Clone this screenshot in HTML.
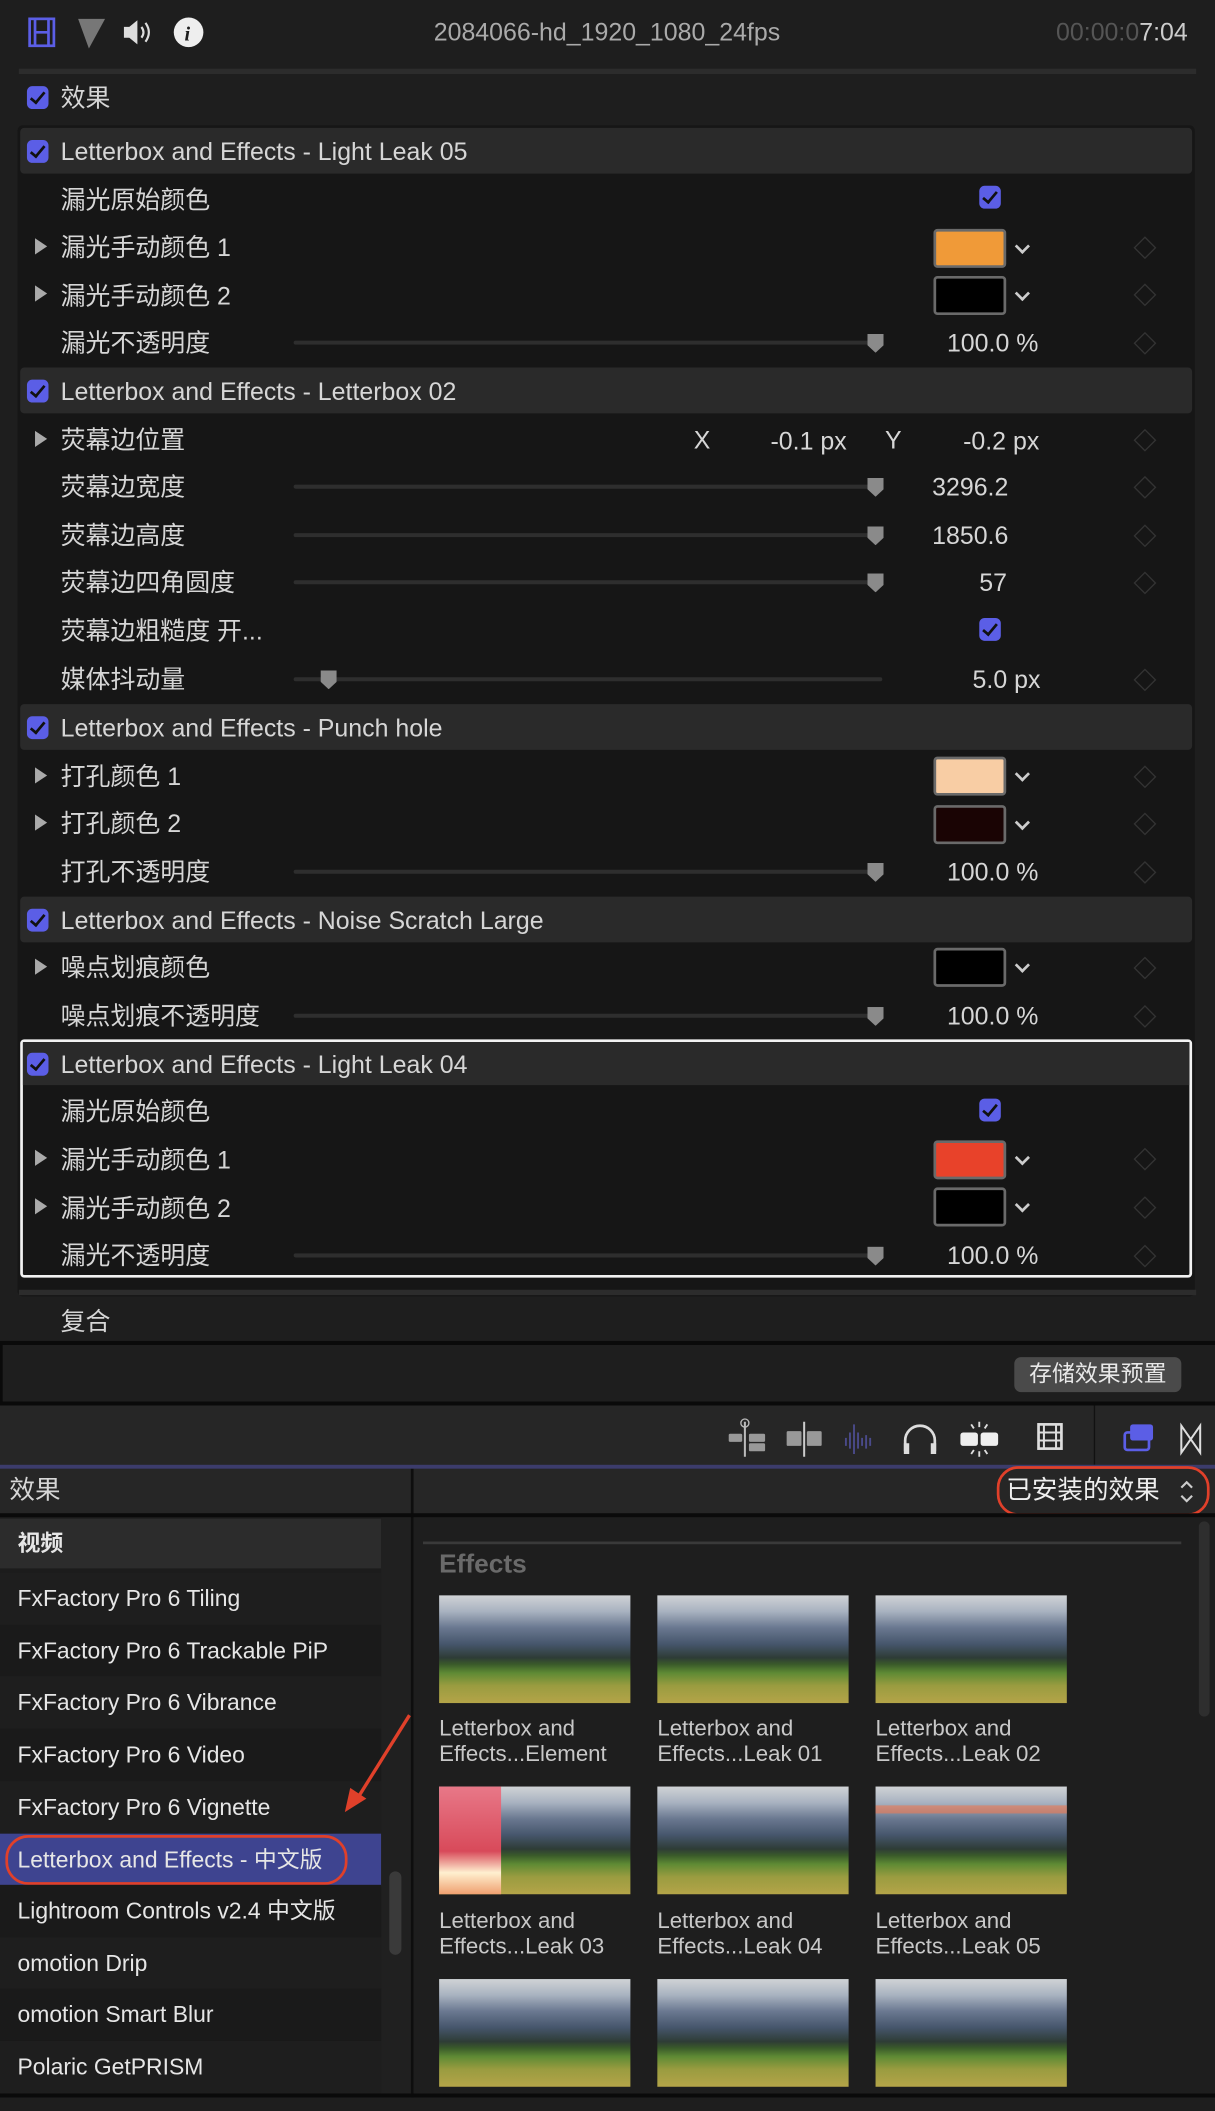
<!DOCTYPE html>
<html><head><meta charset="utf-8"><style>
html,body{margin:0;padding:0;background:#1e1e1e;overflow:hidden;width:1215px;height:2111px}
#w{position:absolute;left:0;top:0;width:902px;height:1568px;transform:scale(1.347,1.3463);transform-origin:0 0;background:#1e1e1e;font-family:"Liberation Sans","Noto Sans CJK SC",sans-serif;color:#d6d6d6}
.a{position:absolute}
.t{position:absolute;font-size:18.5px;line-height:20px;white-space:nowrap;margin-top:1px}
.cb{position:absolute;width:16px;height:17px;border-radius:4px;background:#5b5ee6}
.cb:after{content:"";position:absolute;left:5px;top:2px;width:4px;height:9px;border:solid #111;border-width:0 2px 2px 0;transform:rotate(40deg)}
.tri{position:absolute;width:0;height:0;border-left:9px solid #aaa;border-top:6px solid transparent;border-bottom:6px solid transparent}
.sw{position:absolute;left:693px;width:50px;height:25px;border:2px solid #6a6a6a;border-radius:3px}
.chev{position:absolute;left:755px;width:6px;height:6px;border:solid #ccc;border-width:0 2px 2px 0;transform:rotate(45deg)}
.dia{position:absolute;left:844px;width:10px;height:10px;border:1px solid #333;transform:rotate(45deg)}
.trk{position:absolute;left:218px;width:437px;height:3px;background:#2e2e2e;border-radius:2px}
.th{position:absolute;width:12px;height:14px;background:#8a8a8a;clip-path:polygon(0 0,100% 0,100% 60%,50% 100%,0 60%)}
.hb{position:absolute;left:15px;width:870px;height:34px;background:#2a2a2a;border-radius:3px}
.li{position:absolute;left:0;width:283px;height:39px;font-size:17px;line-height:39px;padding-left:13px;box-sizing:border-box;color:#e6e6e6}
.thumb{position:absolute;width:142px;height:80px;background:linear-gradient(180deg,#d0d3d6 0%,#a8b2c0 15%,#6a7890 30%,#46566c 45%,#2e3c36 58%,#3a5a2a 64%,#5e8a34 72%,#9a9c40 84%,#b4a448 100%)}
.cap{position:absolute;font-size:16.5px;line-height:19px;color:#c8c8c8}
</style></head><body><div id="w">
<div class="a" style="left:0;top:0;width:902px;height:48px;background:#1e1e1e"></div>
<svg class="a" style="left:20px;top:12px" width="140" height="24">
<rect x="2" y="2" width="18" height="20" fill="none" stroke="#5b5ee6" stroke-width="2"/><line x1="6" y1="2" x2="6" y2="22" stroke="#5b5ee6" stroke-width="2"/><line x1="16" y1="2" x2="16" y2="22" stroke="#5b5ee6" stroke-width="2"/><line x1="6" y1="12" x2="16" y2="12" stroke="#5b5ee6" stroke-width="2"/>
<polygon points="38,2 58,2 46,24" fill="#777"/>
<polygon points="72,8 76,8 82,3 82,21 76,16 72,16" fill="#ddd"/><path d="M85 8 q3 4 0 8 M88 5 q5 7 0 14" stroke="#ddd" stroke-width="1.6" fill="none"/>
<circle cx="120" cy="12" r="11" fill="#eee"/><text x="117" y="18" font-size="15" font-weight="bold" font-style="italic" fill="#1e1e1e" font-family="Liberation Serif">i</text>
</svg>
<div class="t" style="left:322px;top:13px;color:#aaa">2084066-hd_1920_1080_24fps</div>
<div class="t" style="left:784px;top:13px;color:#555">00:00:0<span style="color:#ccc">7:04</span></div>
<div class="a" style="left:14px;top:51px;width:874px;height:4px;background:#2c2c2c"></div>
<div class="cb" style="left:20px;top:64px"></div><div class="t" style="left:45px;top:62px">效果</div>
<div class="a" style="left:13px;top:93px;width:874px;height:870px;background:#161616;border-radius:4px"></div>

<div class="hb" style="top:95px"></div>
<div class="cb" style="left:20px;top:104px"></div><div class="t" style="left:45px;top:102px">Letterbox and Effects - Light Leak 05</div>
<div class="t" style="left:45px;top:138px">漏光原始颜色</div><div class="cb" style="left:727px;top:138px"></div>
<div class="tri" style="left:26px;top:177px"></div><div class="t" style="left:45px;top:173px">漏光手动颜色 1</div><div class="sw" style="top:170px;background:#f09a38"></div><div class="chev" style="top:179px"></div><div class="dia" style="top:178px"></div>
<div class="tri" style="left:26px;top:212px"></div><div class="t" style="left:45px;top:209px">漏光手动颜色 2</div><div class="sw" style="top:205px;background:#000"></div><div class="chev" style="top:214px"></div><div class="dia" style="top:213px"></div>
<div class="t" style="left:45px;top:244px">漏光不透明度</div><div class="trk" style="top:253px"></div><div class="th" style="left:644px;top:248px"></div><div class="t" style="left:703px;top:244px">100.0 %</div><div class="dia" style="top:249px"></div>

<div class="hb" style="top:273px"></div>
<div class="cb" style="left:20px;top:282px"></div><div class="t" style="left:45px;top:280px">Letterbox and Effects - Letterbox 02</div>
<div class="tri" style="left:26px;top:320px"></div><div class="t" style="left:45px;top:316px">荧幕边位置</div><div class="t" style="left:515px;top:316px">X</div><div class="t" style="left:572px;top:317px">-0.1 px</div><div class="t" style="left:657px;top:316px">Y</div><div class="t" style="left:715px;top:317px">-0.2 px</div><div class="dia" style="top:321px"></div>
<div class="t" style="left:45px;top:351px">荧幕边宽度</div><div class="trk" style="top:360px"></div><div class="th" style="left:644px;top:355px"></div><div class="t" style="left:692px;top:351px">3296.2</div><div class="dia" style="top:356px"></div>
<div class="t" style="left:45px;top:387px">荧幕边高度</div><div class="trk" style="top:396px"></div><div class="th" style="left:644px;top:391px"></div><div class="t" style="left:692px;top:387px">1850.6</div><div class="dia" style="top:392px"></div>
<div class="t" style="left:45px;top:422px">荧幕边四角圆度</div><div class="trk" style="top:431px"></div><div class="th" style="left:644px;top:426px"></div><div class="t" style="left:727px;top:422px">57</div><div class="dia" style="top:427px"></div>
<div class="t" style="left:45px;top:458px">荧幕边粗糙度 开...</div><div class="cb" style="left:727px;top:459px"></div>
<div class="t" style="left:45px;top:494px">媒体抖动量</div><div class="trk" style="top:503px"></div><div class="th" style="left:238px;top:498px"></div><div class="t" style="left:722px;top:494px">5.0 px</div><div class="dia" style="top:499px"></div>

<div class="hb" style="top:523px"></div>
<div class="cb" style="left:20px;top:532px"></div><div class="t" style="left:45px;top:530px">Letterbox and Effects - Punch hole</div>
<div class="tri" style="left:26px;top:570px"></div><div class="t" style="left:45px;top:566px">打孔颜色 1</div><div class="sw" style="top:562px;background:#f8cda4"></div><div class="chev" style="top:571px"></div><div class="dia" style="top:571px"></div>
<div class="tri" style="left:26px;top:605px"></div><div class="t" style="left:45px;top:601px">打孔颜色 2</div><div class="sw" style="top:598px;background:#1a0404"></div><div class="chev" style="top:607px"></div><div class="dia" style="top:606px"></div>
<div class="t" style="left:45px;top:637px">打孔不透明度</div><div class="trk" style="top:646px"></div><div class="th" style="left:644px;top:641px"></div><div class="t" style="left:703px;top:637px">100.0 %</div><div class="dia" style="top:642px"></div>

<div class="hb" style="top:666px"></div>
<div class="cb" style="left:20px;top:675px"></div><div class="t" style="left:45px;top:673px">Letterbox and Effects - Noise Scratch Large</div>
<div class="tri" style="left:26px;top:712px"></div><div class="t" style="left:45px;top:708px">噪点划痕颜色</div><div class="sw" style="top:704px;background:#000"></div><div class="chev" style="top:713px"></div><div class="dia" style="top:713px"></div>
<div class="t" style="left:45px;top:744px">噪点划痕不透明度</div><div class="trk" style="top:753px"></div><div class="th" style="left:644px;top:748px"></div><div class="t" style="left:703px;top:744px">100.0 %</div><div class="dia" style="top:749px"></div>

<div class="a" style="left:15px;top:772px;width:866px;height:173px;border:2px solid #f2f2f2;border-radius:3px"></div>
<div class="a" style="left:17px;top:774px;width:866px;height:32px;background:#2a2a2a"></div>
<div class="cb" style="left:20px;top:782px"></div><div class="t" style="left:45px;top:780px">Letterbox and Effects - Light Leak 04</div>
<div class="t" style="left:45px;top:815px">漏光原始颜色</div><div class="cb" style="left:727px;top:816px"></div>
<div class="tri" style="left:26px;top:854px"></div><div class="t" style="left:45px;top:851px">漏光手动颜色 1</div><div class="sw" style="top:847px;background:#e8422a"></div><div class="chev" style="top:856px"></div><div class="dia" style="top:855px"></div>
<div class="tri" style="left:26px;top:890px"></div><div class="t" style="left:45px;top:887px">漏光手动颜色 2</div><div class="sw" style="top:882px;background:#000"></div><div class="chev" style="top:891px"></div><div class="dia" style="top:891px"></div>
<div class="t" style="left:45px;top:922px">漏光不透明度</div><div class="trk" style="top:931px"></div><div class="th" style="left:644px;top:926px"></div><div class="t" style="left:703px;top:922px">100.0 %</div><div class="dia" style="top:927px"></div>

<div class="a" style="left:14px;top:958px;width:874px;height:4px;background:#2c2c2c"></div>
<div class="t" style="left:45px;top:971px">复合</div>
<div class="a" style="left:0;top:996px;width:902px;height:3px;background:#0a0a0a"></div>
<div class="a" style="left:0;top:999px;width:2px;height:44px;background:#0a0a0a"></div>
<div class="a" style="left:753px;top:1008px;width:124px;height:26px;background:#4a4a4a;border-radius:5px;font-size:17px;line-height:26px;text-align:center;color:#e8e8e8">存储效果预置</div>
<div class="a" style="left:0;top:1041px;width:902px;height:3px;background:#0a0a0a"></div>
<div class="a" style="left:0;top:1044px;width:902px;height:44px;background:#262626"></div>
<div class="a" style="left:812px;top:1044px;width:1px;height:44px;background:#111"></div>
<svg class="a" style="left:535px;top:1052px" width="367" height="32">
<line x1="18" y1="4" x2="18" y2="30" stroke="#bbb" stroke-width="1.5"/><circle cx="18" cy="5" r="3" fill="none" stroke="#bbb"/><rect x="6" y="13" width="10" height="6" rx="1" fill="#999"/><rect x="21" y="13" width="12" height="6" rx="1" fill="#999"/><rect x="21" y="20" width="12" height="6" rx="1" fill="#999"/>
<rect x="49" y="11" width="11" height="11" rx="1" fill="#999"/><line x1="62" y1="4" x2="62" y2="30" stroke="#ccc" stroke-width="1.5"/><rect x="64" y="11" width="11" height="11" rx="1" fill="#999"/>
<path d="M93 22v-6M96 24v-12M99 28v-22M102 24v-12M105 22v-6M108 24v-10M111 22v-6" stroke="#4a4a8a" stroke-width="1.4"/>
<path d="M137 26v-8a11 11 0 0 1 22 0v8" fill="none" stroke="#ddd" stroke-width="2"/><rect x="136" y="20" width="4" height="8" fill="#ddd"/><rect x="156" y="20" width="4" height="8" fill="#ddd"/>
<rect x="178" y="12" width="13" height="10" rx="2" fill="#eee"/><rect x="193" y="12" width="13" height="10" rx="2" fill="#eee"/><path d="M192 4v4M186 6l2 3M198 6l-2 3M192 26v4M186 28l2-3M198 28l-2-3" stroke="#ddd" stroke-width="1.4"/>
<rect x="236" y="6" width="17" height="18" fill="none" stroke="#ddd" stroke-width="2"/><path d="M240 6v18M249 6v18M236 12h17M236 18h17" stroke="#ddd" stroke-width="1.5"/>
<rect x="300" y="12" width="18" height="13" rx="2" fill="none" stroke="#5b5ee6" stroke-width="2"/><rect x="304" y="6" width="17" height="12" rx="2" fill="#5b5ee6"/>
<path d="M342 7v20l14-20v20z" fill="none" stroke="#ddd" stroke-width="1.5"/>
</svg>
<div class="a" style="left:0;top:1088px;width:902px;height:3px;background:#3c3c6c"></div>
<div class="a" style="left:0;top:1091px;width:902px;height:34px;background:#262626"></div>
<div class="a" style="left:305px;top:1091px;width:2px;height:477px;background:#0e0e0e"></div>
<div class="t" style="left:7px;top:1097px;font-size:19px">效果</div>
<div class="t" style="left:747px;top:1097px;font-size:19px;color:#eee">已安装的效果</div>
<svg class="a" style="left:874px;top:1096px" width="14" height="24"><path d="M3 9l4-4 4 4M3 15l4 4 4-4" stroke="#ccc" stroke-width="1.6" fill="none"/></svg>
<div class="a" style="left:740px;top:1089px;width:154px;height:33px;border:2.5px solid #e0402a;border-radius:16px"></div>
<div class="a" style="left:0;top:1124px;width:902px;height:3px;background:#0a0a0a"></div>
<div class="a" style="left:0;top:1127px;width:283px;height:441px;background:#1c1c1c"></div>
<div class="li" style="top:1128px;height:37px;line-height:37px;background:#2c2c2c;font-weight:bold">视频</div>
<div class="li" style="top:1168px;background:#1e1e1e">FxFactory Pro 6 Tiling</div>
<div class="li" style="top:1207px;background:#1a1a1a">FxFactory Pro 6 Trackable PiP</div>
<div class="li" style="top:1245px;background:#1e1e1e">FxFactory Pro 6 Vibrance</div>
<div class="li" style="top:1284px;background:#1a1a1a">FxFactory Pro 6 Video</div>
<div class="li" style="top:1323px;background:#1e1e1e">FxFactory Pro 6 Vignette</div>
<div class="li" style="top:1362px;background:#3e4490">Letterbox and Effects - 中文版</div>
<div class="a" style="left:4px;top:1363px;width:250px;height:33px;border:2.5px solid #e0402a;border-radius:17px"></div>
<div class="li" style="top:1400px;background:#1a1a1a">Lightroom Controls v2.4 中文版</div>
<div class="li" style="top:1439px;background:#1e1e1e">omotion Drip</div>
<div class="li" style="top:1477px;background:#1a1a1a">omotion Smart Blur</div>
<div class="li" style="top:1516px;background:#1e1e1e">Polaric GetPRISM</div>
<div class="a" style="left:283px;top:1127px;width:22px;height:441px;background:#202020"></div>
<div class="a" style="left:289px;top:1390px;width:9px;height:62px;background:#3a3a3a;border-radius:5px"></div>
<svg class="a" style="left:250px;top:1270px" width="60" height="80"><path d="M54 4L14 68" stroke="#e0402a" stroke-width="2.5"/><polygon points="6,76 10,58 22,66" fill="#e0402a"/></svg>
<div class="a" style="left:307px;top:1127px;width:595px;height:441px;background:#1e1e1e"></div>
<div class="a" style="left:314px;top:1145px;width:563px;height:2px;background:#3a3a3a"></div>
<div class="a" style="left:890px;top:1130px;width:8px;height:145px;background:#2e2e2e;border-radius:4px"></div>
<div class="t" style="left:326px;top:1151px;font-size:19.5px;font-weight:bold;color:#6a6a6a">Effects</div>
<div class="thumb" style="left:326px;top:1185px"></div><div class="thumb" style="left:488px;top:1185px"></div><div class="thumb" style="left:650px;top:1185px"></div>
<div class="cap" style="left:326px;top:1275px">Letterbox and<br>Effects...Element</div>
<div class="cap" style="left:488px;top:1275px">Letterbox and<br>Effects...Leak 01</div>
<div class="cap" style="left:650px;top:1275px">Letterbox and<br>Effects...Leak 02</div>
<div class="thumb" style="left:326px;top:1327px"></div><div class="a" style="left:326px;top:1327px;width:46px;height:80px;background:linear-gradient(180deg,#e87888,#d84a5a 60%,#fff0d0 80%,#f0a070)"></div>
<div class="thumb" style="left:488px;top:1327px"></div><div class="thumb" style="left:650px;top:1327px"></div><div class="a" style="left:650px;top:1341px;width:142px;height:6px;background:rgba(240,120,80,.6)"></div>
<div class="cap" style="left:326px;top:1418px">Letterbox and<br>Effects...Leak 03</div>
<div class="cap" style="left:488px;top:1418px">Letterbox and<br>Effects...Leak 04</div>
<div class="cap" style="left:650px;top:1418px">Letterbox and<br>Effects...Leak 05</div>
<div class="thumb" style="left:326px;top:1470px"></div><div class="thumb" style="left:488px;top:1470px"></div><div class="thumb" style="left:650px;top:1470px"></div>
<div class="a" style="left:0;top:1555px;width:902px;height:3px;background:#0a0a0a"></div>
<div class="a" style="left:0;top:1558px;width:902px;height:10px;background:#1e1e1e"></div>
</div></body></html>
